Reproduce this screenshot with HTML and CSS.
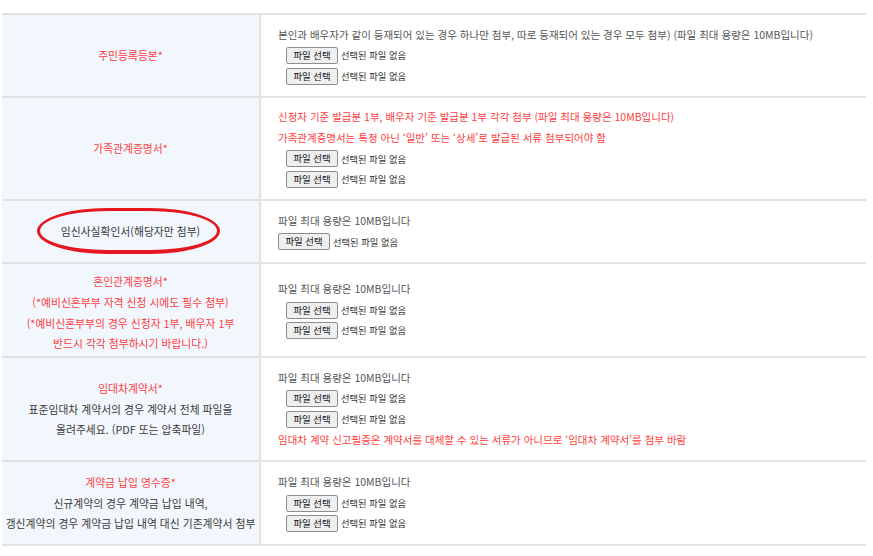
FILE: index.html
```html
<!DOCTYPE html>
<html lang="ko">
<head>
<meta charset="utf-8">
<link rel="stylesheet" href="styles.css">
</head>
<body>
<div class="table">
  <div class="row r1">
    <div class="th"><p class="red">주민등록등본*</p></div>
    <div class="td">
      <p class="gray">본인과 배우자가 같이 등재되어 있는 경우 하나만 첨부, 따로 등재되어 있는 경우 모두 첨부) (파일 최대 용량은 10MB입니다)</p>
      <div class="file ind"><span class="btn">파일 선택</span><span class="none">선택된 파일 없음</span></div>
      <div class="file ind"><span class="btn">파일 선택</span><span class="none">선택된 파일 없음</span></div>
    </div>
  </div>
  <div class="row r2">
    <div class="th"><p class="red">가족관계증명서*</p></div>
    <div class="td">
      <p class="red">신청자 기준 발급분 1부, 배우자 기준 발급분 1부 각각 첨부 (파일 최대 용량은 10MB입니다)</p>
      <p class="red">가족관계증명서는 특정 아닌 ‘일반’ 또는 ‘상세’로 발급된 서류 첨부되어야 함</p>
      <div class="file ind"><span class="btn">파일 선택</span><span class="none">선택된 파일 없음</span></div>
      <div class="file ind"><span class="btn">파일 선택</span><span class="none">선택된 파일 없음</span></div>
    </div>
  </div>
  <div class="row r3">
    <div class="th mark"><p class="dark">임신사실확인서(해당자만 첨부)</p><span class="ellipse"></span></div>
    <div class="td">
      <p class="gray">파일 최대 용량은 10MB입니다</p>
      <div class="file"><span class="btn">파일 선택</span><span class="none">선택된 파일 없음</span></div>
    </div>
  </div>
  <div class="row r4">
    <div class="th low">
      <p class="red">혼인관계증명서*</p>
      <p class="red">(*예비신혼부부 자격 신청 시에도 필수 첨부)</p>
      <p class="red">(*예비신혼부부의 경우 신청자 1부, 배우자 1부</p>
      <p class="red">반드시 각각 첨부하시기 바랍니다.)</p>
    </div>
    <div class="td">
      <p class="gray">파일 최대 용량은 10MB입니다</p>
      <div class="file ind"><span class="btn">파일 선택</span><span class="none">선택된 파일 없음</span></div>
      <div class="file ind"><span class="btn">파일 선택</span><span class="none">선택된 파일 없음</span></div>
    </div>
  </div>
  <div class="row r5">
    <div class="th">
      <p class="red">임대차계약서*</p>
      <p class="dark">표준임대차 계약서의 경우 계약서 전체 파일을</p>
      <p class="dark">올려주세요. (PDF 또는 압축파일)</p>
    </div>
    <div class="td">
      <p class="gray">파일 최대 용량은 10MB입니다</p>
      <div class="file ind"><span class="btn">파일 선택</span><span class="none">선택된 파일 없음</span></div>
      <div class="file ind"><span class="btn">파일 선택</span><span class="none">선택된 파일 없음</span></div>
      <p class="red">임대차 계약 신고필증은 계약서를 대체할 수 있는 서류가 아니므로 ‘임대차 계약서’를 첨부 바람</p>
    </div>
  </div>
  <div class="row r6">
    <div class="th">
      <p class="red">계약금 납입 영수증*</p>
      <p class="dark">신규계약의 경우 계약금 납입 내역,</p>
      <p class="dark">갱신계약의 경우 계약금 납입 내역 대신 기존계약서 첨부</p>
    </div>
    <div class="td">
      <p class="gray">파일 최대 용량은 10MB입니다</p>
      <div class="file ind"><span class="btn">파일 선택</span><span class="none">선택된 파일 없음</span></div>
      <div class="file ind"><span class="btn">파일 선택</span><span class="none">선택된 파일 없음</span></div>
    </div>
  </div>
</div>
</body>
</html>
```
FILE: styles.css
```css
html, body {
  margin: 0;
  padding: 0;
  background: #ffffff;
}
body {
  font-family: "Noto Sans CJK KR", "Noto Sans", sans-serif;
  color: #444;
}
p {
  margin: 0;
}
.table {
  margin: 13px 0 0 2px;
  width: 864px;
  border-top: 2px solid #e2e2e2;
}
.row {
  display: flex;
  border-bottom: 2px solid #e2e2e2;
}
.r1 { height: 81px; }
.r2 { height: 101px; }
.r3 { height: 61px; }
.r4 { height: 92px; }
.r5 { height: 102px; }
.r6 { height: 82px; }
.th {
  width: 257px;
  flex: none;
  background: #f2f7fd;
  border-right: 2px solid #e2e2e2;
  display: flex;
  flex-direction: column;
  justify-content: center;
  align-items: center;
  text-align: center;
  font-size: 10.8px;
  line-height: 20.6px;
}
.low p:first-child { margin-top: 5px; }
.mark {
  position: relative;
}
.ellipse {
  position: absolute;
  left: 35px;
  top: 7px;
  width: 177px;
  height: 39px;
  border: 3px solid #e5161e;
  border-bottom-width: 4px;
  border-radius: 70px / 23px;
}
.td {
  flex: 1;
  padding-left: 17px;
  display: flex;
  flex-direction: column;
  justify-content: center;
  font-size: 10.5px;
  line-height: 20.6px;
}
.red { color: #ff3d3d; }
.dark { color: #3a3a3a; }
.gray { color: #555; }
.file {
  display: flex;
  align-items: center;
  height: 20.6px;
}
.ind {
  padding-left: 8px;
}
.btn {
  box-sizing: border-box;
  width: 52px;
  height: 17px;
  border: 1px solid #8d8d8d;
  border-radius: 2px;
  background: #efefef;
  color: #111;
  font-size: 9.4px;
  line-height: 15px;
  text-align: center;
}
.none {
  margin-left: 3px;
  font-size: 9.3px;
  color: #333;
}
```
